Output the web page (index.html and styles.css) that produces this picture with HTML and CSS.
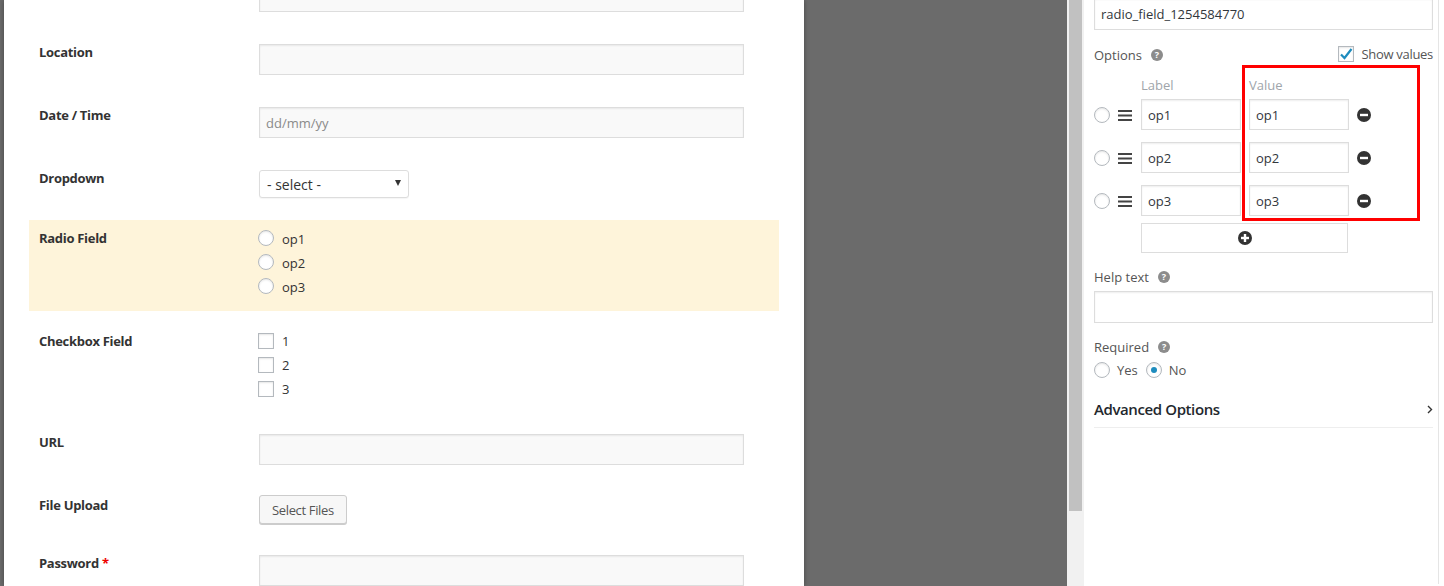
FILE: index.html
```html
<!DOCTYPE html>
<html lang="en">
<head>
  <meta charset="UTF-8" />
  <meta name="viewport" content="width=device-width, initial-scale=1.0"/>
  <title>Form Builder</title>
  <link rel="stylesheet" href="styles.css">
</head>
<body>

<div class="builder">
  <!-- form preview -->
  <div class="form-panel">
    <ul class="fields">
      <li class="field">
        <div class="field-label"></div>
        <div class="field-input"><input class="text-input" type="text"></div>
      </li>
      <li class="field">
        <div class="field-label">Location</div>
        <div class="field-input"><input class="text-input" type="text"></div>
      </li>
      <li class="field">
        <div class="field-label">Date / Time</div>
        <div class="field-input"><input class="text-input" type="text" placeholder="dd/mm/yy"></div>
      </li>
      <li class="field">
        <div class="field-label">Dropdown</div>
        <div class="field-input">
          <div class="select"><span>- select -</span><span class="caret"></span></div>
        </div>
      </li>
      <li class="field current">
        <div class="field-label">Radio Field</div>
        <div class="field-input choices">
          <div class="choice"><span class="radio"></span>op1</div>
          <div class="choice"><span class="radio"></span>op2</div>
          <div class="choice"><span class="radio"></span>op3</div>
        </div>
      </li>
      <li class="field checks">
        <div class="field-label">Checkbox Field</div>
        <div class="field-input choices">
          <div class="choice"><span class="checkbox"></span>1</div>
          <div class="choice"><span class="checkbox"></span>2</div>
          <div class="choice"><span class="checkbox"></span>3</div>
        </div>
      </li>
      <li class="field">
        <div class="field-label">URL</div>
        <div class="field-input"><input class="text-input" type="text"></div>
      </li>
      <li class="field upload">
        <div class="field-label">File Upload</div>
        <div class="field-input"><button class="button">Select Files</button></div>
      </li>
      <li class="field">
        <div class="field-label">Password <span class="required">*</span></div>
        <div class="field-input"><input class="text-input" type="password"></div>
      </li>
    </ul>
  </div>

  <div class="backdrop"></div>

  <div class="scrollbar"><div class="thumb"></div></div>

  <!-- field settings -->
  <aside class="sidebar">
    <div class="sidebar-inner">
      <input class="sb-input name-input" type="text" value="radio_field_1254584770">

      <div class="options-head">
        <span class="sb-label">Options <span class="help">?</span></span>
        <span class="show-values">
          <span class="checkbox checked">
            <svg width="14" height="14" viewBox="0 0 14 14"><path d="M2 7.5 L5.5 11 L12.5 2" fill="none" stroke="#1e8cbe" stroke-width="2.2"/></svg>
          </span>
          Show values
        </span>
      </div>

      <div class="options">
        <div class="opt-header"><span class="col-label">Label</span><span>Value</span></div>

        <div class="opt-row">
          <span class="radio"></span>
          <svg class="handle" width="14" height="12" viewBox="0 0 14 12"><rect y="1" width="14" height="2"/><rect y="5.5" width="14" height="2"/><rect y="10" width="14" height="2"/></svg>
          <input class="sb-input opt-input" type="text" value="op1">
          <input class="sb-input opt-input" type="text" value="op1">
          <svg class="remove" width="14" height="14" viewBox="0 0 14 14"><circle cx="7" cy="7" r="7"/><rect x="3" y="5.8" width="8" height="2.4" fill="#fff"/></svg>
        </div>
        <div class="opt-row">
          <span class="radio"></span>
          <svg class="handle" width="14" height="12" viewBox="0 0 14 12"><rect y="1" width="14" height="2"/><rect y="5.5" width="14" height="2"/><rect y="10" width="14" height="2"/></svg>
          <input class="sb-input opt-input" type="text" value="op2">
          <input class="sb-input opt-input" type="text" value="op2">
          <svg class="remove" width="14" height="14" viewBox="0 0 14 14"><circle cx="7" cy="7" r="7"/><rect x="3" y="5.8" width="8" height="2.4" fill="#fff"/></svg>
        </div>
        <div class="opt-row">
          <span class="radio"></span>
          <svg class="handle" width="14" height="12" viewBox="0 0 14 12"><rect y="1" width="14" height="2"/><rect y="5.5" width="14" height="2"/><rect y="10" width="14" height="2"/></svg>
          <input class="sb-input opt-input" type="text" value="op3">
          <input class="sb-input opt-input" type="text" value="op3">
          <svg class="remove" width="14" height="14" viewBox="0 0 14 14"><circle cx="7" cy="7" r="7"/><rect x="3" y="5.8" width="8" height="2.4" fill="#fff"/></svg>
        </div>

        <button class="add-btn">
          <svg width="14" height="14" viewBox="0 0 14 14"><circle cx="7" cy="7" r="7" fill="#333"/><rect x="3" y="5.8" width="8" height="2.4" fill="#fff"/><rect x="5.8" y="3" width="2.4" height="8" fill="#fff"/></svg>
        </button>

        <div class="marker"></div>
      </div>

      <div class="sb-label help-label">Help text <span class="help">?</span></div>
      <input class="sb-input help-input" type="text">

      <div class="sb-label req-label">Required <span class="help">?</span></div>
      <div class="req-choices">
        <span class="radio"></span><span class="req-text">Yes</span>
        <span class="radio on"></span><span class="req-text">No</span>
      </div>

      <div class="advanced">
        <span>Advanced Options</span>
        <svg width="6" height="9" viewBox="0 0 6 9"><path d="M1 1 L4.5 4.5 L1 8" fill="none" stroke="#333" stroke-width="1.4"/></svg>
      </div>
    </div>
  </aside>
</div>

</body>
</html>
```

FILE: styles.css
```css
* { box-sizing: border-box; }
body {
  margin: 0;
  height: 586px;
  overflow: hidden;
  background: #6b6b6b;
  font-family: "Open Sans", "Liberation Sans", sans-serif;
  font-size: 13px;
  color: #333;
}
.builder { display: flex; height: 586px; }

/* form preview */
.form-panel {
  flex: none;
  width: 800px;
  margin-left: 4px;
  padding: 0 25px;
  background: #fff;
  box-shadow: 0 0 5px rgba(0, 0, 0, 0.35);
  overflow: hidden;
}
.fields { list-style: none; margin: -29px 0 0; padding: 0; }
.field { display: flex; width: 750px; padding: 10px; margin-bottom: 12px; }
.field.current { background: #fef4da; padding-bottom: 12px; }
.field.checks { padding-bottom: 11px; }
.field.upload { padding-top: 8px; padding-bottom: 9px; }
.field.upload .field-label { padding-top: 2px; }
.field-label {
  flex: none;
  width: 220px;
  font-weight: 700;
  line-height: 16px;
  letter-spacing: -0.3px;
  color: #333;
}
.required { color: #e00; }
.text-input {
  display: block;
  width: 485px;
  height: 31px;
  padding: 0 6px;
  border: 1px solid #ddd;
  background: #f9f9f9;
  box-shadow: inset 0 1px 2px rgba(0, 0, 0, 0.07);
  font: inherit;
  color: #333;
}
.text-input::placeholder { color: #8a8a8a; }
.select {
  display: flex;
  align-items: center;
  justify-content: space-between;
  width: 150px;
  height: 28px;
  padding: 0 7px 0 7px;
  border: 1px solid #ddd;
  border-radius: 3px;
  background: #fff;
  box-shadow: 0 1px 1px rgba(0, 0, 0, 0.04);
  font-size: 14px;
}
.caret {
  width: 0; height: 0;
  border-left: 3.5px solid transparent;
  border-right: 3.5px solid transparent;
  border-top: 6px solid #333;
  margin-top: -3px;
}
.choices { margin-left: -1px; }
.field.current .choices { margin-top: -3px; }
.field.checks .choices { margin-top: -4px; }
.choice { display: flex; align-items: center; height: 24px; gap: 8px; line-height: 18px; }
.radio, .checkbox {
  flex: none;
  display: inline-block;
  width: 16px;
  height: 16px;
  border: 1px solid #b4b9be;
  background: #fff;
  box-shadow: inset 0 1px 2px rgba(0, 0, 0, 0.1);
}
.radio { border-radius: 50%; }
.choice .radio { margin-top: -2px; }
.choice .checkbox { margin-top: -1px; }
.button {
  height: 29px;
  padding: 0 12px;
  border: 1px solid #ccc;
  border-radius: 3px;
  background: #f7f7f7;
  box-shadow: 0 1px 0 #ccc;
  font: inherit;
  letter-spacing: -0.35px;
  color: #555;
}

.backdrop { flex: 1; }
.scrollbar { flex: none; width: 17px; padding-left: 2px; background: #f1f1f1; }
.thumb { width: 13px; height: 511px; background: #c1c1c1; }

/* settings sidebar */
.sidebar { flex: none; width: 360px; padding-left: 10px; background: #fff; }
.sidebar-inner {
  position: relative;
  width: 345px;
  height: 100%;
  padding-right: 5px;
  border-right: 1px solid #e5e5e5;
  color: #444;
}
.sb-input {
  display: block;
  height: 32px;
  padding: 0 6px;
  border: 1px solid #ddd;
  background: #fff;
  box-shadow: inset 0 1px 2px rgba(0, 0, 0, 0.07);
  font: inherit;
  color: #32373c;
}
.name-input { width: 339px; margin-top: -2px; }
.sb-label { display: flex; align-items: center; line-height: 18px; color: #555; }
.help {
  display: inline-flex;
  align-items: center;
  justify-content: center;
  width: 12px;
  height: 12px;
  margin-left: 9px;
  border-radius: 50%;
  background: #8c8c8c;
  color: #fff;
  font-size: 9px;
  font-weight: 700;
}
.options-head {
  display: flex;
  justify-content: space-between;
  align-items: center;
  height: 16px;
  margin-top: 16px;
}
.options-head .sb-label { padding-top: 2px; }
.show-values { display: flex; align-items: center; gap: 7px; color: #555; letter-spacing: -0.3px; }
.checkbox.checked { position: relative; }
.checkbox.checked svg { position: absolute; left: 0; top: 0; }

.options { position: relative; margin-top: 14px; }
.opt-header { display: flex; line-height: 18px; color: #a0a5aa; }
.col-label { width: 155px; padding-left: 47px; }
.opt-row { display: flex; align-items: center; height: 31px; margin-top: 5px; margin-bottom: 8px; }
.opt-row + .opt-row { margin-top: 12px; margin-bottom: 8px; }
.opt-row .handle { margin-left: 8px; fill: #444; }
.opt-input { width: 100px; height: 31px; }
.opt-row .opt-input:first-of-type { margin-left: 9px; }
.opt-row .opt-input + .opt-input { margin-left: 8px; }
.remove { margin-left: 8px; fill: #333; }
.add-btn {
  display: flex;
  align-items: center;
  justify-content: center;
  width: 207px;
  height: 30px;
  margin: -1px 0 0 47px;
  border: 1px solid #ddd;
  background: #fff;
}
.marker {
  position: absolute;
  left: 148px;
  top: -11px;
  width: 178px;
  height: 156px;
  border: 3px solid #f00;
}

.help-label { margin-top: 15px; }
.help-input { width: 339px; margin-top: 5px; }
.req-label { margin-top: 15px; }
.req-choices { display: flex; align-items: center; height: 24px; margin-top: 2px; color: #555; }
.req-text { margin: 0 8px 0 7px; }
.radio.on { position: relative; }
.radio.on::after {
  content: "";
  position: absolute;
  left: 4px;
  top: 4px;
  width: 6px;
  height: 6px;
  border-radius: 50%;
  background: #1e8cbe;
}
.advanced {
  display: flex;
  justify-content: space-between;
  align-items: center;
  width: 339px;
  margin-top: 17px;
  padding-bottom: 8px;
  border-bottom: 1px solid #eee;
  font-size: 15px;
  font-weight: 600;
  line-height: 20px;
  letter-spacing: -0.4px;
  color: #23282d;
}
```
